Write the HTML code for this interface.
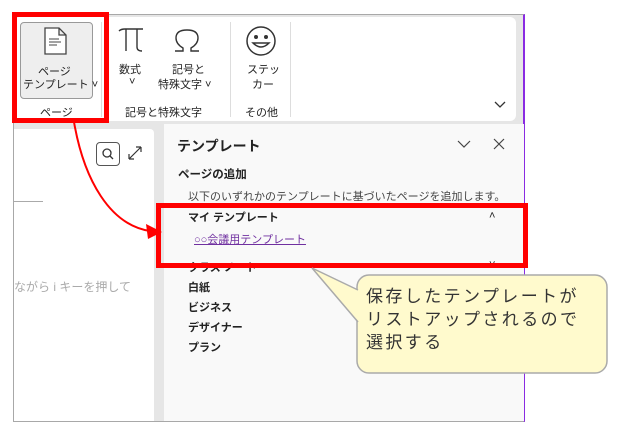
<!DOCTYPE html>
<html><head><meta charset="utf-8"><style>
*{margin:0;padding:0;box-sizing:border-box}
body{width:628px;height:437px;background:#fff;position:relative;overflow:hidden;font-family:"Liberation Sans","Noto Sans CJK JP",sans-serif;color:#222}
.a{position:absolute}
.t{font-size:11px;white-space:nowrap}
.b{font-weight:bold}
</style></head><body>
<div class="a" style="left:13px;top:14px;width:512px;height:408px;background:#e6e6e6;border:1px solid #a8a8a8;border-right:2px solid #8a2be2"></div>
<div class="a" style="left:14px;top:17px;width:502px;height:104px;background:#fff;border-radius:6px"></div>
<div class="a" style="left:20px;top:22px;width:73px;height:77px;background:#eee;border:1px solid #999;border-radius:4px"></div>
<svg class="a" style="left:43px;top:26px" width="26" height="30" viewBox="0 0 26 30"><path d="M2 2H16L23 9V28H2Z M16 2V9H23" fill="#fff" stroke="#444" stroke-width="1.3"/><path d="M6 13H16M6 16H18M6 19H14" stroke="#444" stroke-width="1"/></svg>
<div class="a t" style="left:38px;top:63px">ページ</div>
<div class="a t" style="left:23px;top:76px">テンプレート ˅</div>
<div class="a t" style="left:40px;top:104px">ページ</div>
<div class="a" style="left:101px;top:22px;width:1px;height:95px;background:#ddd"></div>
<svg class="a" style="left:117px;top:27px" width="28" height="26"><path d="M2 4Q4 2 8 2H26M9 2V24M20 2V20Q20 24 25 24" fill="none" stroke="#333" stroke-width="1.4"/></svg>
<div class="a t" style="left:119px;top:61px">数式</div>
<div class="a t" style="left:129px;top:76px">˅</div>
<svg class="a" style="left:172px;top:27px" width="30" height="26"><path d="M3 24H11V21Q4 17 4 11Q4 3 15 3Q26 3 26 11Q26 17 19 21V24H27" fill="none" stroke="#333" stroke-width="1.4"/></svg>
<div class="a t" style="left:172px;top:61px">記号と</div>
<div class="a t" style="left:158px;top:76px">特殊文字 ˅</div>
<div class="a t" style="left:125px;top:104px">記号と特殊文字</div>
<div class="a" style="left:230px;top:22px;width:1px;height:95px;background:#ddd"></div>
<svg class="a" style="left:245px;top:25px" width="32" height="32"><circle cx="16" cy="16" r="14" fill="none" stroke="#333" stroke-width="1.5"/><circle cx="11" cy="12" r="2" fill="#333"/><circle cx="21" cy="12" r="2" fill="#333"/><path d="M8 18Q16 26 24 18Z" fill="none" stroke="#333" stroke-width="1.5"/></svg>
<div class="a t" style="left:247px;top:61px">ステッ</div>
<div class="a t" style="left:252px;top:76px">カー</div>
<div class="a t" style="left:245px;top:104px">その他</div>
<div class="a" style="left:290px;top:22px;width:1px;height:95px;background:#ddd"></div>
<svg class="a" style="left:494px;top:101px" width="12" height="8"><path d="M1 1L6 6L11 1" fill="none" stroke="#333" stroke-width="1.3"/></svg>
<div class="a" style="left:14px;top:129px;width:140px;height:292px;background:#fff;border-radius:0 4px 0 0"></div>
<div class="a" style="left:96px;top:142px;width:24px;height:24px;border:1.5px solid #555;border-radius:4px"></div>
<svg class="a" style="left:100px;top:146px" width="16" height="16"><circle cx="7" cy="7" r="4" fill="none" stroke="#333" stroke-width="1.3"/><path d="M10 10L13 13" stroke="#333" stroke-width="1.3"/></svg>
<svg class="a" style="left:127px;top:145px" width="16" height="16"><path d="M2 14L14 2M2 14V9M2 14H7M14 2H9M14 2V7" fill="none" stroke="#333" stroke-width="1.2"/></svg>
<div class="a" style="left:14px;top:201px;width:29px;height:1px;background:#aaa"></div>
<div class="a t" style="left:14px;top:278px;color:#aaa;font-size:12px">ながら i キーを押して</div>
<div class="a" style="left:164px;top:124px;width:360px;height:297px;background:#f9f9f9"></div>
<div class="a b" style="left:177px;top:136px;font-size:14px">テンプレート</div>
<svg class="a" style="left:457px;top:139px" width="14" height="10"><path d="M1 2L7 8L13 2" fill="none" stroke="#444" stroke-width="1.2"/></svg>
<svg class="a" style="left:493px;top:138px" width="12" height="12"><path d="M1 1L11 11M11 1L1 11" stroke="#444" stroke-width="1.2"/></svg>
<div class="a t b" style="left:178px;top:166px;font-size:11.5px">ページの追加</div>
<div class="a t" style="left:188px;top:188px;color:#444">以下のいずれかのテンプレートに基づいたページを追加します。</div>
<div class="a t b" style="left:188px;top:209px">マイ テンプレート</div>
<div class="a t" style="left:489px;top:210px">˄</div>
<div class="a t" style="left:194px;top:231px;color:#7030a0;text-decoration:underline">○○会議用テンプレート</div>
<div class="a t b" style="left:188px;top:259px">クラス ノート</div>
<div class="a t" style="left:489px;top:259px">˅</div>
<div class="a t b" style="left:188px;top:279px">白紙</div>
<div class="a t b" style="left:188px;top:299px">ビジネス</div>
<div class="a t b" style="left:188px;top:319px">デザイナー</div>
<div class="a t b" style="left:188px;top:339px">プラン</div>
<div class="a" style="left:12px;top:12px;width:97px;height:111px;border:5px solid #f00"></div>
<div class="a" style="left:156px;top:203px;width:372px;height:65px;border:5px solid #f00"></div>
<svg class="a" style="left:0;top:0" width="628" height="437"><path d="M74 122C84 180 110 225 150 231" fill="none" stroke="#f00" stroke-width="2"/><path d="M162 232L146 224L148 239Z" fill="#f00"/>
<rect x="357" y="275" width="250" height="98" rx="12" fill="#fffacd" stroke="#aaa" stroke-width="1.5"/>
<path d="M359 290L312 268L359 322Z" fill="#fffacd"/>
<path d="M358 290L312 268L358 322" fill="none" stroke="#aaa" stroke-width="1.5"/>
</svg>
<div class="a" style="left:366px;top:285px;font-size:17px;line-height:23px;color:#333;letter-spacing:2.4px;white-space:nowrap">保存したテンプレートが<br>リストアップされるので<br>選択する</div>
</body></html>
